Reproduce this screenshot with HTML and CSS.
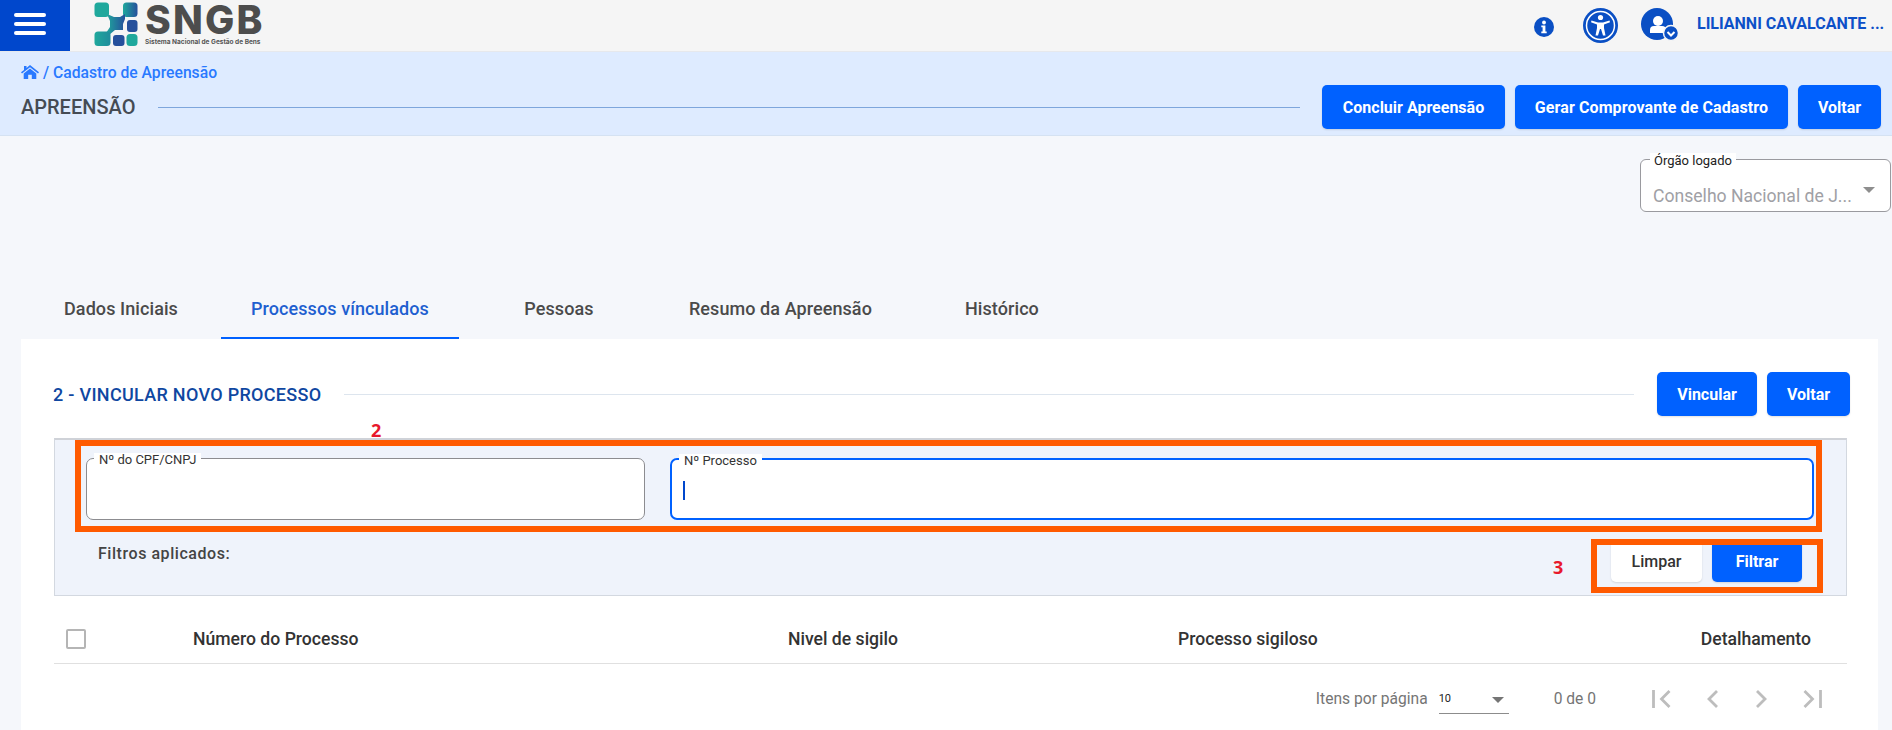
FILE: index.html
```html
<!DOCTYPE html>
<html lang="pt-BR">
<head>
<meta charset="utf-8">
<title>SNGB - Cadastro de Apreensão</title>
<link rel="stylesheet" href="styles.css">
</head>
<body>
<div class="page">
  <header class="topbar">
    <button class="burger" aria-label="Menu"><span></span><span></span><span></span></button>
    <div class="logo">
      <svg class="logo-mark" width="44" height="44" viewBox="0 0 44 44">
        <defs>
          <linearGradient id="lg1" x1="0" y1="0" x2="1" y2="0"><stop offset="0" stop-color="#1fa89c"/><stop offset="1" stop-color="#26509c"/></linearGradient>
          <linearGradient id="lg2" x1="0" y1="0" x2="1" y2="0"><stop offset="0" stop-color="#1fa89c"/><stop offset="1" stop-color="#1f8c9c"/></linearGradient>
        </defs>
        <rect x="0.500" y="0.500" width="14.500" height="14.500" rx="3.500" fill="#1fa89c"/>
        <rect x="29" y="0.500" width="14.500" height="14.500" rx="3.500" fill="url(#lg1)"/>
        <path d="M13 12 L20 15 H26 L31 12 V17 L29 22 V28 H21 L15 33 L12 31 L16 25 V19 Z" fill="url(#lg1)"/>
        <rect x="33" y="18" width="10.500" height="12" rx="3" fill="#26509c"/>
        <rect x="0.500" y="29.500" width="16" height="14.500" rx="3.500" fill="url(#lg2)"/>
        <rect x="19" y="33" width="11.500" height="11" rx="3" fill="#26509c"/>
        <rect x="32.500" y="32" width="11" height="12" rx="3.500" fill="#1fa89c"/>
      </svg>
      <div class="logo-text">
        <div class="logo-name">SNGB</div>
        <div class="logo-sub">Sistema Nacional de Gestão de Bens</div>
      </div>
    </div>
    <div class="top-actions">
      <svg class="ic-info" width="20" height="20" viewBox="0 0 20 20">
        <circle cx="10" cy="10" r="10" fill="#0a4fc4"/>
        <circle cx="10" cy="5.500" r="1.900" fill="#fff"/>
        <path d="M7.300 8.500h4.100v6h1.300v1.800H7.300v-1.800h1.300v-4.200H7.300z" fill="#fff"/>
      </svg>
      <svg class="ic-access" width="35" height="35" viewBox="0 0 35 35">
        <circle cx="17.500" cy="17.500" r="17.500" fill="#0a4fc4"/>
        <circle cx="17.500" cy="17.500" r="14" fill="none" stroke="#fff" stroke-width="1.500"/>
        <circle cx="17.500" cy="9.500" r="2.600" fill="#fff"/>
        <path d="M8.500 12.500 L15 14.500 H20 L26.500 12.500 L27 14.300 L21 16.500 V20 L22.500 27.500 H20 L18 21 H17 L15 27.500 H12.500 L14 20 V16.500 L8 14.300 Z" fill="#fff"/>
      </svg>
      <svg class="ic-user" width="38" height="38" viewBox="0 0 38 38">
        <circle cx="16" cy="16" r="16" fill="#0a4fc4"/>
        <circle cx="17" cy="13" r="5" fill="#fff"/>
        <path d="M9 25 v-3 a4 4 0 0 1 4 -4 h8 a4 4 0 0 1 4 4 v3z" fill="#fff"/>
        <circle cx="30" cy="25" r="7.500" fill="#0a4fc4" stroke="#f5f5f5" stroke-width="1.500"/>
        <path d="M26.500 24 L30 27.500 L33.500 24" fill="none" stroke="#fff" stroke-width="2"/>
      </svg>
      <span class="user-name">LILIANNI CAVALCANTE ...</span>
    </div>
  </header>

  <section class="band">
    <nav class="crumb">
      <svg width="18" height="14" viewBox="0 0 18 14"><path d="M9 0 L18 7.300 L17 8.600 L9 2.200 L1 8.600 L0 7.300 L3 4.900 V1 H5.500 V2.900 Z M9 3.400 L15.300 8.500 V14 H10.800 V9.800 H7.200 V14 H2.700 V8.500 Z" fill="#2979ff"/></svg>
      <span>/ Cadastro de Apreensão</span>
    </nav>
    <div class="band-row">
      <h1 class="band-title">APREENSÃO</h1>
      <div class="band-line"></div>
      <button class="btn btn-primary btn-concluir">Concluir Apreensão</button>
      <button class="btn btn-primary btn-gerar">Gerar Comprovante de Cadastro</button>
      <button class="btn btn-primary btn-voltar">Voltar</button>
    </div>
  </section>

  <div class="org-row">
    <div class="org-select">
      <span class="org-label">Órgão logado</span>
      <span class="org-value">Conselho Nacional de J...</span>
      <span class="org-arrow"></span>
    </div>
  </div>

  <nav class="tabs">
    <div class="tab tab-first">Dados Iniciais</div>
    <div class="tab tab-active">Processos vínculados</div>
    <div class="tab">Pessoas</div>
    <div class="tab">Resumo da Apreensão</div>
    <div class="tab">Histórico</div>
  </nav>

  <main class="card">
    <div class="card-head">
      <h2 class="card-title">2 - VINCULAR NOVO PROCESSO</h2>
      <div class="card-line"></div>
      <button class="btn btn-primary btn-vincular">Vincular</button>
      <button class="btn btn-primary btn-voltar">Voltar</button>
    </div>

    <section class="filters">
      <div class="filter-fields">
        <div class="field">
          <span class="field-label">Nº do CPF/CNPJ</span>
        </div>
        <div class="field field-focus">
          <span class="field-label">Nº Processo</span>
          <span class="caret"></span>
        </div>
      </div>
      <div class="filter-foot">
        <span class="applied">Filtros aplicados:</span>
        <button class="btn btn-light">Limpar</button>
        <button class="btn btn-primary btn-filtrar">Filtrar</button>
      </div>
    </section>

    <div class="table-head">
      <div class="cell-check"><span class="checkbox"></span></div>
      <div>Número do Processo</div>
      <div>Nivel de sigilo</div>
      <div>Processo sigiloso</div>
      <div class="cell-right">Detalhamento</div>
    </div>

    <div class="pager">
      <span class="pager-label">Itens por página</span>
      <div class="pager-select"><span class="pager-num">10</span><span class="pager-arrow"></span></div>
      <span class="pager-range">0 de 0</span>
      <div class="pager-icons">
        <svg width="20" height="20" viewBox="0 0 20 20"><path d="M1.500 1v18M17.500 2L9.500 10L17.500 18" fill="none" stroke="#bdbdbd" stroke-width="2.800"/></svg>
        <svg width="20" height="20" viewBox="0 0 20 20"><path d="M15 2L7 10L15 18" fill="none" stroke="#bdbdbd" stroke-width="2.800"/></svg>
        <svg width="20" height="20" viewBox="0 0 20 20"><path d="M5 2L13 10L5 18" fill="none" stroke="#bdbdbd" stroke-width="2.800"/></svg>
        <svg width="20" height="20" viewBox="0 0 20 20"><path d="M18.500 1v18M2.500 2L10.500 10L2.500 18" fill="none" stroke="#bdbdbd" stroke-width="2.800"/></svg>
      </div>
    </div>
  </main>

  <div class="mark mark-fields"></div>
  <div class="mark mark-buttons"></div>
  <span class="mark-num mark-num-2">2</span>
  <span class="mark-num mark-num-3">3</span>
</div>
</body>
</html>
```
FILE: styles.css
```css
* { box-sizing: border-box; }
html, body { margin: 0; padding: 0; height: 100%; overflow: hidden; }
body { background: #f5f7fb; font-family: Roboto, "Liberation Sans", sans-serif; color: #333; }
.page { position: relative; width: 1892px; height: 730px; overflow: hidden; }

/* top bar */
.topbar { height: 51px; background: #f5f5f5; display: flex; align-items: center; }
.burger { width: 70px; height: 51px; background: #0047cc; border: 0; padding: 13px 0 0 14px; display: flex; flex-direction: column; align-items: flex-start; justify-content: flex-start; gap: 5px; }
.burger span { display: block; width: 32px; height: 4px; border-radius: 2px; background: #fff; }
.logo { margin-left: 24px; display: flex; align-items: flex-start; height: 51px; padding-top: 2px; }
.logo-text { margin-left: 7px; }
.logo-name { font-family: Inter, sans-serif; font-weight: 800; font-size: 39px; line-height: 36px; color: #4d4d4d; letter-spacing: 2.200px; }
.logo-sub { font-family: Inter, sans-serif; font-weight: 700; font-size: 6.500px; line-height: 8px; color: #555; white-space: nowrap; }
.top-actions { margin-left: auto; display: flex; align-items: flex-start; height: 51px; padding-right: 10px; }
.ic-info { margin-top: 17px; }
.ic-access { margin-top: 8px; margin-left: 29px; }
.ic-user { margin-top: 8px; margin-left: 23px; }
.user-name { width: 185px; margin-left: 18px; margin-top: 13px; font-size: 16px; font-weight: 700; line-height: 21px; color: #0d50c8; white-space: nowrap; }

/* band */
.band { height: 85px; background: #deebff; border-bottom: 1px solid #d5e2f2; border-top: 1px solid #e6e8ec; padding: 12px 11px 0 21px; }
.crumb { display: flex; align-items: center; gap: 4px; height: 16px; font-size: 15.700px; font-weight: 500; color: #2979ff; }
.band-row { display: flex; align-items: center; margin-top: 5px; }
.band-title { margin: 0; font-size: 20px; font-weight: 500; color: #454b54; line-height: 44px; }
.band-line { flex: 1; height: 1px; background: #7ea6dc; margin: 0 22px 0 23px; }

/* buttons */
.btn { height: 44px; border: 0; border-radius: 5px; font-family: Roboto, sans-serif; font-size: 16px; font-weight: 700; padding: 0; box-shadow: 0 1px 2px rgba(0,0,0,.12); }
.btn-primary { background: #0061ff; color: #fff; }
.btn-concluir { width: 183px; margin-right: 10px; }
.btn-gerar { width: 273px; margin-right: 10px; letter-spacing: .1px; }
.btn-voltar { width: 83px; }
.btn-vincular { width: 100px; margin-right: 10px; }
.btn-light { width: 91px; height: 42px; background: #fff; color: #333; font-weight: 500; margin-right: 10px; }
.btn-filtrar { width: 90px; height: 42px; }

/* organ select */
.org-row { display: flex; justify-content: flex-end; padding: 23px 1px 0 0; }
.org-select { position: relative; width: 251px; height: 53px; background: #fff; border: 1px solid #9a9a9f; border-radius: 6px; }
.org-label { position: absolute; left: 9px; top: -7px; background: #fff; padding: 0 4px; font-size: 13px; line-height: 15px; color: #222; }
.org-value { position: absolute; left: 12px; top: 26px; font-size: 17.600px; line-height: 20px; color: #a0a0a5; white-space: nowrap; }
.org-arrow { position: absolute; right: 15px; top: 27px; border-left: 6px solid transparent; border-right: 6px solid transparent; border-top: 6px solid #8e8e8e; }

/* tabs */
.tabs { display: flex; gap: 20px; margin-top: 79px; padding-left: 41px; height: 48px; }
.tab { min-width: 160px; padding: 0 30px 14px; display: flex; align-items: center; justify-content: center; font-size: 18px; font-weight: 500; letter-spacing: .08px; color: #4a4a4a; white-space: nowrap; }
.tab-first { padding: 0 20px 14px; }
.tab-active { color: #1e5fd0; border-bottom: 2px solid #0061ff; padding-bottom: 12px; }

/* card */
.card { margin: 0 14px 0 21px; height: 391px; background: #fff; padding-top: 33px; }
.card-head { display: flex; align-items: center; padding: 0 28px 0 32px; }
.card-title { margin: 0; font-size: 18px; font-weight: 500; letter-spacing: .3px; color: #0f47a1; white-space: nowrap; }
.card-line { flex: 1; height: 1px; background: #dde5ee; margin: 0 23px; }

/* filters */
.filters { margin: 22px 31px 0 33px; height: 158px; background: #eff3fb; border: 1px solid #d3d8e0; border-top: 2px solid #cfd2d8; padding: 18px 32px 0 31px; }
.filter-fields { display: grid; grid-template-columns: 559px 1fr; gap: 25px; }
.field { position: relative; height: 62px; background: #fff; border: 1px solid #8c8c90; border-radius: 7px; }
.field-focus { border: 2px solid #0061ff; }
.field-label { position: absolute; left: 7px; top: -6px; background: #fff; padding: 0 5px; font-size: 13px; line-height: 14px; color: #333; white-space: nowrap; }
.caret { position: absolute; left: 11px; top: 21px; width: 2px; height: 19px; background: #0047cc; }
.filter-foot { display: flex; align-items: flex-start; margin-top: 20px; padding-right: 12px; }
.applied { margin: 5px auto 0 12px; font-size: 16px; font-weight: 500; line-height: 18px; letter-spacing: .55px; color: #444; }

/* table */
.table-head { margin: 18px 31px 0 33px; height: 50px; display: grid; grid-template-columns: 139px 595px 390px 1fr 180px; align-items: center; border-bottom: 1px solid #e0e0e0; font-size: 17.600px; font-weight: 500; color: #333; }
.cell-check { padding-left: 12px; display: flex; }
.checkbox { width: 20px; height: 20px; border: 2px solid #b5b5b5; border-radius: 2px; }
.cell-right { text-align: right; padding-right: 36px; }

/* pager */
.pager { margin: 0 31px 0 33px; height: 70px; display: flex; align-items: center; justify-content: flex-end; padding-right: 25px; font-size: 15.600px; color: #757575; }
.pager-select { position: relative; width: 70px; height: 30px; margin-left: 11px; border-bottom: 1px solid #8c8c8c; display: flex; align-items: center; }
.pager-num { font-size: 11px; color: #222; }
.pager-arrow { position: absolute; right: 5px; top: 13px; border-left: 6px solid transparent; border-right: 6px solid transparent; border-top: 6px solid #757575; }
.pager-range { margin-left: 45px; margin-right: 56px; }
.pager-icons { display: flex; gap: 30px; }

/* overlay annotations */
.mark { position: absolute; border: 6px solid #ff5a00; }
.mark-fields { left: 75px; top: 440px; width: 1747px; height: 92px; }
.mark-buttons { left: 1591px; top: 539px; width: 232px; height: 54px; }
.mark-num { position: absolute; font-family: "Open Sans", sans-serif; font-weight: 700; font-size: 18px; line-height: 18px; color: #e8192c; }
.mark-num-2 { left: 371px; top: 421px; }
.mark-num-3 { left: 1553px; top: 558px; }
```
